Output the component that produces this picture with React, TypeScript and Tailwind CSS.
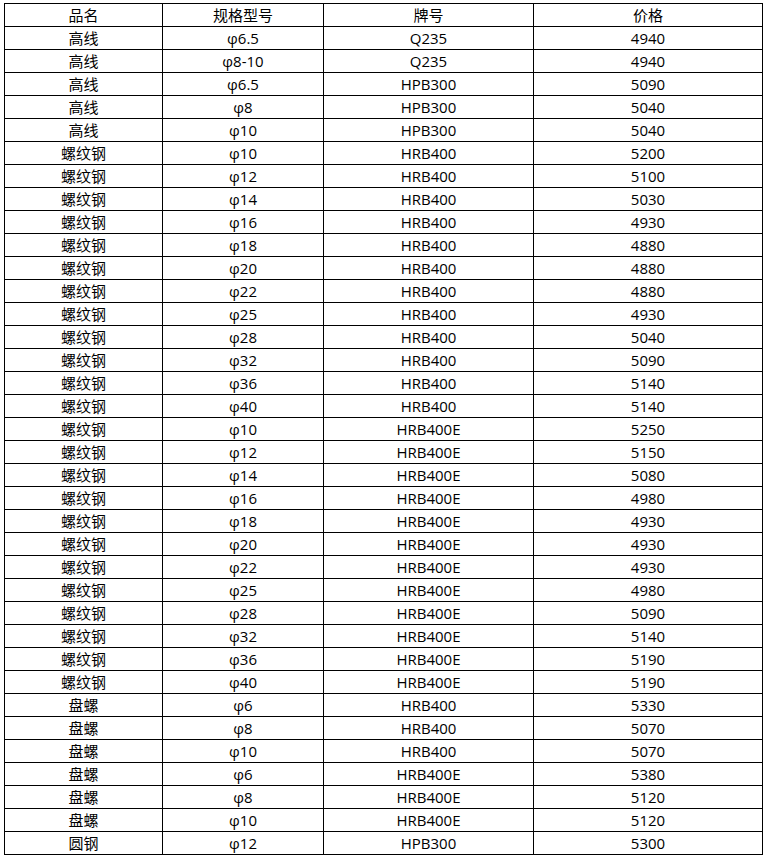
import React from "react";

type Row = [string, string, string, string];

const rows: Row[] = [
  ["高线", "φ6.5", "Q235", "4940"],
  ["高线", "φ8-10", "Q235", "4940"],
  ["高线", "φ6.5", "HPB300", "5090"],
  ["高线", "φ8", "HPB300", "5040"],
  ["高线", "φ10", "HPB300", "5040"],
  ["螺纹钢", "φ10", "HRB400", "5200"],
  ["螺纹钢", "φ12", "HRB400", "5100"],
  ["螺纹钢", "φ14", "HRB400", "5030"],
  ["螺纹钢", "φ16", "HRB400", "4930"],
  ["螺纹钢", "φ18", "HRB400", "4880"],
  ["螺纹钢", "φ20", "HRB400", "4880"],
  ["螺纹钢", "φ22", "HRB400", "4880"],
  ["螺纹钢", "φ25", "HRB400", "4930"],
  ["螺纹钢", "φ28", "HRB400", "5040"],
  ["螺纹钢", "φ32", "HRB400", "5090"],
  ["螺纹钢", "φ36", "HRB400", "5140"],
  ["螺纹钢", "φ40", "HRB400", "5140"],
  ["螺纹钢", "φ10", "HRB400E", "5250"],
  ["螺纹钢", "φ12", "HRB400E", "5150"],
  ["螺纹钢", "φ14", "HRB400E", "5080"],
  ["螺纹钢", "φ16", "HRB400E", "4980"],
  ["螺纹钢", "φ18", "HRB400E", "4930"],
  ["螺纹钢", "φ20", "HRB400E", "4930"],
  ["螺纹钢", "φ22", "HRB400E", "4930"],
  ["螺纹钢", "φ25", "HRB400E", "4980"],
  ["螺纹钢", "φ28", "HRB400E", "5090"],
  ["螺纹钢", "φ32", "HRB400E", "5140"],
  ["螺纹钢", "φ36", "HRB400E", "5190"],
  ["螺纹钢", "φ40", "HRB400E", "5190"],
  ["盘螺", "φ6", "HRB400", "5330"],
  ["盘螺", "φ8", "HRB400", "5070"],
  ["盘螺", "φ10", "HRB400", "5070"],
  ["盘螺", "φ6", "HRB400E", "5380"],
  ["盘螺", "φ8", "HRB400E", "5120"],
  ["盘螺", "φ10", "HRB400E", "5120"],
  ["圆钢", "φ12", "HPB300", "5300"],
];

const header: Row = ["品名", "规格型号", "牌号", "价格"];
const widths = ["w-[158px]", "w-[161px]", "w-[210px]", "w-[229px]"];

function RowView({ r }: { r: Row }) {
  return (
    <div className="flex h-[23px]">
      {r.map((c, i) => (
        <div
          key={i}
          className={`${widths[i]} shrink-0 h-[23px] border-r border-b border-black flex items-center justify-center leading-none pt-[1px]`}
        >
          {c}
        </div>
      ))}
    </div>
  );
}

export default function App() {
  return (
    <div className="w-[766px] h-[857px] bg-white pt-[3px] pl-[4px]">
      <div
        className="w-[759px] border-l border-t border-black text-[15px] text-black"
        style={{ fontFamily: "'Open Sans', 'Noto Sans CJK SC', sans-serif" }}
      >
        <RowView r={header} />
        {rows.map((r, i) => (
          <RowView key={i} r={r} />
        ))}
      </div>
    </div>
  );
}
